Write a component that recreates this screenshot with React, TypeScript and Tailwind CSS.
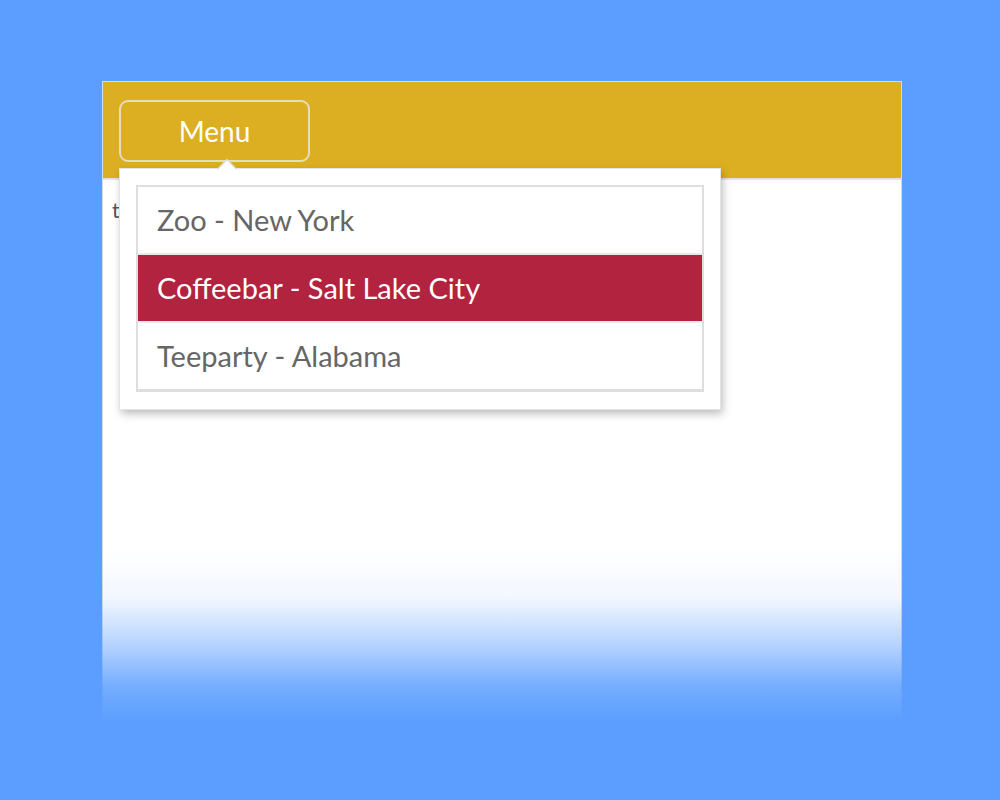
import React from "react";

export default function App() {
  const font = { fontFamily: '"Lato", "Noto Sans", sans-serif' };
  const items = [
    { label: "Zoo - New York", active: false },
    { label: "Coffeebar - Salt Lake City", active: true },
    { label: "Teeparty - Alabama", active: false },
  ];
  return (
    <div className="relative w-[1000px] h-[800px] overflow-hidden bg-[#5c9eff]" style={font}>
      <div className="pt-[81px] pl-[102px]">
        <div className="w-[800px] h-[719px] bg-white border border-[#d4dbe6] border-b-0">
          <div className="h-[98px] bg-[#dcaf22] border-b-2 border-[#e2e2e2] pl-[16px] pt-[18px]">
            <button className="w-[191px] h-[62px] rounded-[9px] border-2 border-[#e6dcc0] text-white text-[28px] leading-none flex items-center justify-center">
              Menu
            </button>
          </div>
          <div className="pl-[9px] pt-[14px] text-[21px] text-[#555]">the quick content</div>
        </div>
      </div>

      {/* Dropdown */}
      <div className="absolute left-[119px] top-[168px] w-[602px] h-[242px] bg-white border border-[#e4e4e4] shadow-[2px_4px_8px_rgba(0,0,0,0.25)] p-[16px]">
        <div className="absolute left-[100px] -top-[7px] w-[14px] h-[14px] bg-white rotate-45 border-t border-l border-[#d8d8d8]" />
        <div className="flex flex-col border-2 border-[#dedede] border-b-[3px]">
          {items.map((it, i) => (
            <div
              key={it.label}
              className={
                "flex items-center pl-[19px] text-[29px] " +
                (i < items.length - 1 ? "h-[68px] border-b-2 border-[#e8e8e8] " : "h-[66px] ") +
                (it.active ? "bg-[#b1233f] text-white" : "text-[#666]")
              }
            >
              {it.label}
            </div>
          ))}
        </div>
      </div>

      {/* fade overlay */}
      <div className="absolute left-0 right-0 top-[550px] h-[190px] bg-[linear-gradient(to_bottom,rgba(92,158,255,0)_0%,rgba(92,158,255,0.08)_25%,rgba(92,158,255,0.45)_50%,rgba(92,158,255,0.85)_72%,#5c9eff_90%)]" />
      <div className="absolute left-0 right-0 top-[740px] h-[60px] bg-[#5c9eff]" />
    </div>
  );
}
